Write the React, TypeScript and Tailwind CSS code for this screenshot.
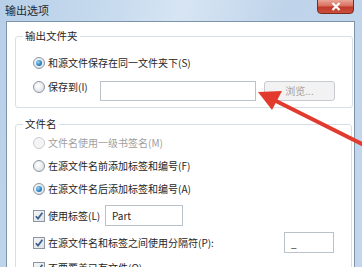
import React from "react";

function Radio({ checked = false, disabled = false }: { checked?: boolean; disabled?: boolean }) {
  return (
    <span
      className={
        "relative inline-flex w-[12px] h-[12px] rounded-full border items-center justify-center shrink-0 " +
        (disabled
          ? "border-[#c8ccd0] bg-[#f4f4f4]"
          : "border-[#8a96a2] bg-[radial-gradient(circle_at_40%_40%,#ffffff_0%,#e6e9ec_60%,#cfd4d9_100%)]")
      }
    >
      {checked && (
        <span className="w-[6px] h-[6px] rounded-full bg-[radial-gradient(circle_at_35%_35%,#9fd6f5_0%,#2f86c4_55%,#1a5a8e_100%)]" />
      )}
    </span>
  );
}

function Check() {
  return (
    <span className="inline-flex w-[12px] h-[12px] border border-[#8a96a2] bg-[linear-gradient(135deg,#f4f5f6,#dfe3e7)] items-center justify-center shrink-0">
      <svg width="10" height="10" viewBox="0 0 10 10">
        <path d="M1.8 5.2 L4 7.6 L8.4 1.8" fill="none" stroke="#3a5f8f" strokeWidth="1.7" />
      </svg>
    </span>
  );
}

export default function App() {
  return (
    <div className="relative w-[362px] h-[267px] overflow-hidden bg-[linear-gradient(100deg,#b7cfe8_0%,#c9dcef_30%,#d7e5f3_45%,#bfd4ea_70%,#c2d7ec_100%)] font-['Microsoft_YaHei','Noto_Sans_CJK_SC',sans-serif] text-[#262626]">
      {/* title bar */}
      <div className="h-[21px] pl-[5px] pt-[2px] text-[11px] leading-[16px] text-[#1e2a36]">输出选项</div>
      <div className="absolute left-[317px] top-[-1px] w-[37px] h-[15px] rounded-b-[4px] border border-[#7a2a22] bg-[linear-gradient(180deg,#e9a596_0%,#d9705f_45%,#c0392b_55%,#c9503c_100%)] flex items-center justify-center">
        <svg width="10" height="9" viewBox="0 0 10 9">
          <path d="M1.5 1 L8.5 8 M8.5 1 L1.5 8" stroke="#ffffff" strokeWidth="2.2" />
        </svg>
      </div>

      {/* client */}
      <div className="ml-[6px] mr-[7px] h-[250px] border border-[#7d93aa] bg-white px-[8px] pt-[6px] text-[10px] leading-[14px]">
        <fieldset className="border border-[#d5dfe5] rounded-[3px] h-[80px] px-[17px]">
          <legend className="ml-[-10px] px-[2px] text-[10.5px] leading-[16px]">输出文件夹</legend>
          <div className="flex items-center h-[22px] mt-[8px]">
            <Radio checked />
            <span className="ml-[3px]">和源文件保存在同一文件夹下(S)</span>
          </div>
          <div className="flex items-center h-[20px] mt-[7px]">
            <span className="flex items-center -mt-[8px]">
              <Radio />
              <span className="ml-[3px] w-[52px]">保存到(I)</span>
            </span>
            <div className="w-[156px] h-[20px] border border-[#b9c2cb] bg-white" />
            <div className="ml-[8px] w-[71px] h-[20px] rounded-[3px] border border-[#c7cbd0] bg-[#f2f2f2] flex items-center justify-center text-[#a2a2a2]">
              浏览...
            </div>
          </div>
        </fieldset>

        <fieldset className="mt-[8px] border border-[#d5dfe5] rounded-[3px] h-[200px] px-[17px]">
          <legend className="ml-[-10px] px-[2px] text-[10.5px] leading-[16px]">文件名</legend>
          <div className="flex items-center h-[22px] text-[#a0a0a0]">
            <Radio disabled />
            <span className="ml-[3px]">文件名使用一级书签名(M)</span>
          </div>
          <div className="flex items-center h-[23px]">
            <Radio />
            <span className="ml-[3px]">在源文件名前添加标签和编号(F)</span>
          </div>
          <div className="flex items-center h-[23px]">
            <Radio checked />
            <span className="ml-[3px]">在源文件名后添加标签和编号(A)</span>
          </div>
          <div className="flex items-center h-[27px] mt-[2px]">
            <Check />
            <span className="ml-[3px] w-[57px]">使用标签(L)</span>
            <div className="w-[78px] h-[21px] border border-[#b9c2cb] bg-white flex items-center pl-[6px]">
              Part
            </div>
          </div>
          <div className="flex items-center h-[27px]">
            <Check />
            <span className="ml-[3px] w-[236px]">在源文件名和标签之间使用分隔符(P):</span>
            <div className="w-[50px] h-[21px] border border-[#b9c2cb] bg-white flex items-center pl-[6px]">
              _
            </div>
          </div>
          <div className="flex items-center h-[24px]">
            <Check />
            <span className="ml-[3px]">不要覆盖已有文件(O)</span>
          </div>
        </fieldset>
      </div>

      {/* red arrow */}
      <svg className="absolute left-0 top-0 pointer-events-none" width="362" height="267" viewBox="0 0 362 267">
        <line x1="272" y1="99" x2="370" y2="148" stroke="#e23b2e" strokeWidth="4" strokeLinecap="round" />
        <polygon points="258,92 282,91 272,110" fill="#e23b2e" />
      </svg>
    </div>
  );
}
